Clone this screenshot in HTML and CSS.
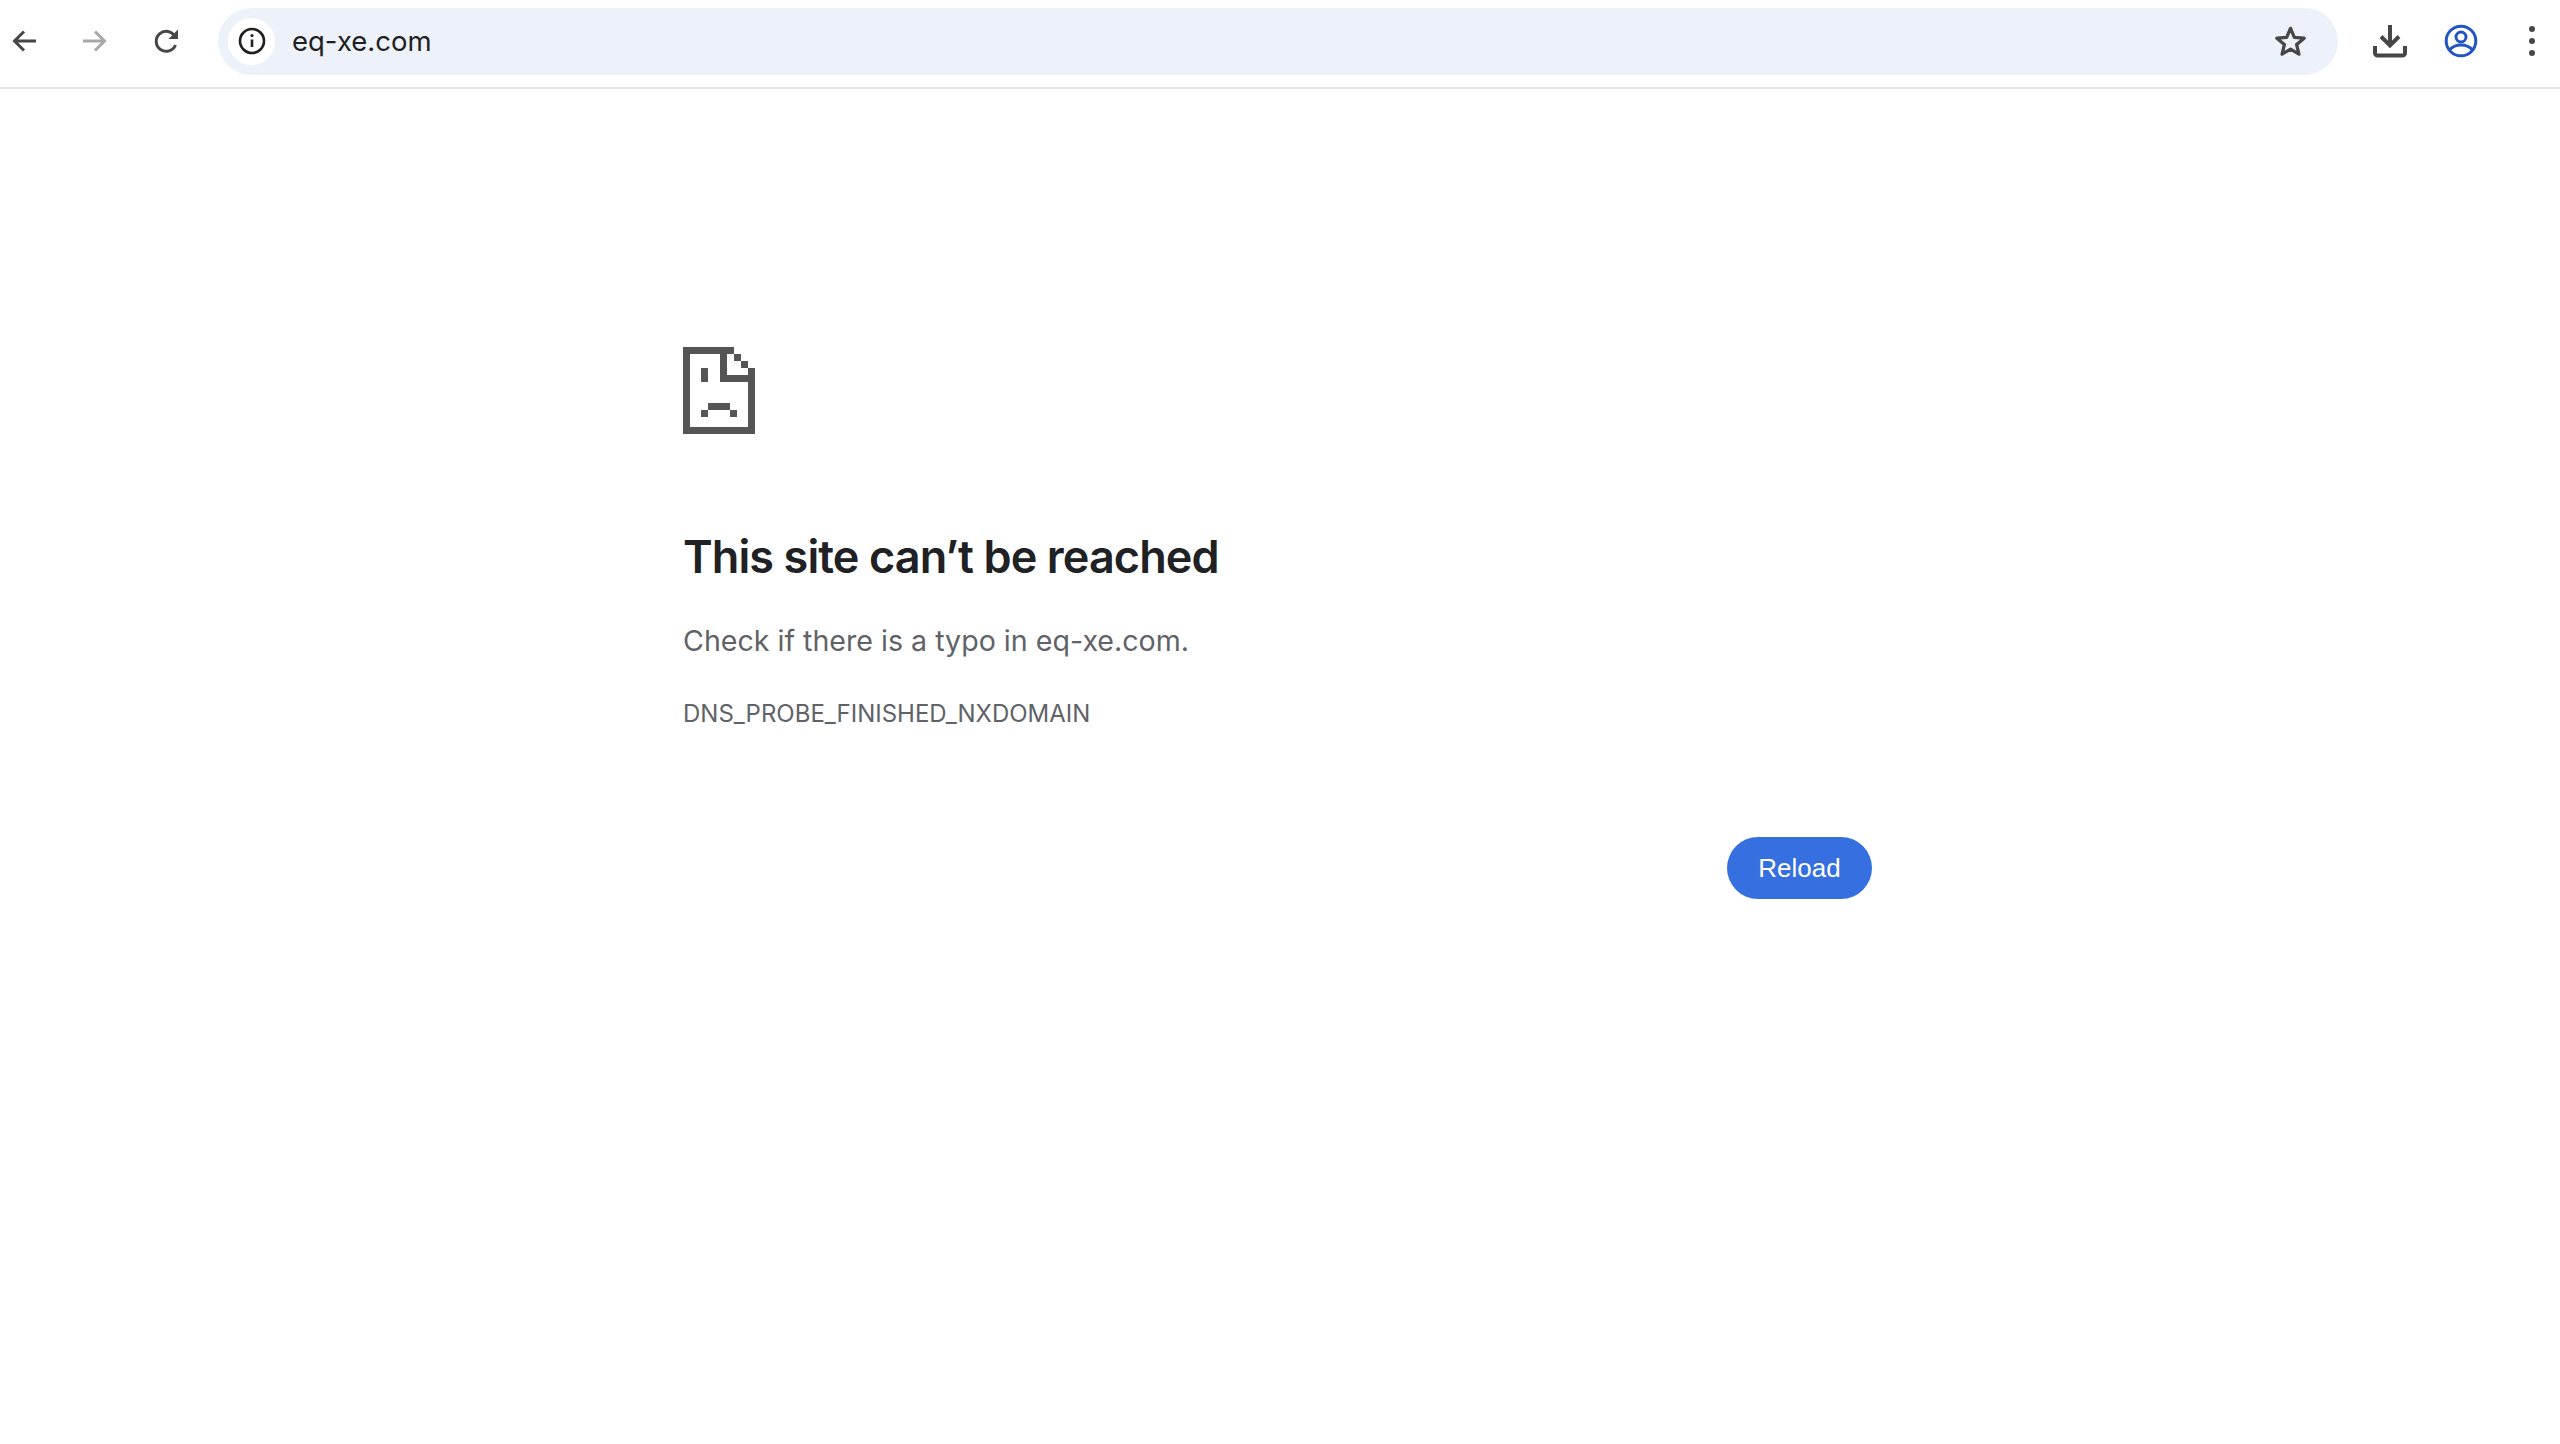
FILE: index.html
```html
<!DOCTYPE html>
<html lang="en">
<head>
    <meta charset="UTF-8">
    <title>eq-xe.com</title>
    <link rel="stylesheet" href="styles.css">
</head>
<body>
    <!-- Browser toolbar -->
    <div class="toolbar">
        <svg class="nav-icon back" viewBox="0 0 26 26"><path d="M24 13H3M12 3.5 2.5 13l9.500 9.500"/></svg>
        <svg class="nav-icon forward" viewBox="0 0 26 26"><path d="M2 13h21M14 3.500l9.500 9.500-9.500 9.500"/></svg>
        <svg class="nav-icon reload-icon" viewBox="0 0 26 26"><path d="M21.500 17a10 10 0 1 1-.5-8.500"/><path class="solid" d="M24 1.500V11h-9.500z"/></svg>
        <div class="omnibox">
            <div class="site-info">
                <svg class="info-icon" viewBox="0 0 28 28"><circle cx="14" cy="14" r="12"/><path d="M14 12.500V20"/><circle class="solid" cx="14" cy="8.500" r="1.600"/></svg>
            </div>
            <span class="url">eq-xe.com</span>
            <svg class="star-icon" viewBox="0 0 32 32"><path d="M16 4l3.500 8.300 9 .7-6.900 5.800 2.100 8.800L16 23l-7.700 4.600 2.100-8.800L3.500 13l9-.7z"/></svg>
        </div>
        <div class="toolbar-right">
            <svg class="download-icon" viewBox="0 0 34 34"><path d="M17 1v19M8 12.500l9 9 9-9"/><path d="M2 22v7a2.500 2.500 0 0 0 2.500 2.500h25A2.500 2.500 0 0 0 32 29v-7"/></svg>
            <svg class="profile-icon" viewBox="0 0 34 34"><circle cx="17" cy="17" r="14.800"/><circle cx="17" cy="13" r="5"/><path d="M5.500 26c3-3.500 7-5 11.500-5s8.500 1.500 11.500 5"/></svg>
            <svg class="menu-icon" viewBox="0 0 8 32"><circle cx="4" cy="4" r="3"/><circle cx="4" cy="16" r="3"/><circle cx="4" cy="28" r="3"/></svg>
        </div>
    </div>

    <!-- Error page -->
    <div class="error-page">
        <svg class="sad-doc" viewBox="0 0 72 87">
            <path d="M0 0h51v7H0zM0 7h7v73H0zM0 80h72v7H0zM65 21h7v59h-7zM37 7h7v21h-7zM37 28h28v7H37zM51 7h7v7h-7zM58 14h7v7h-7z"/>
            <path d="M18 21h7v14h-7zM25 56h22v7H25zM18 63h7v7h-7zM47 63h7v7h-7z"/>
        </svg>
        <h1>This site can’t be reached</h1>
        <p class="message">Check if there is a typo in eq-xe.com.</p>
        <p class="error-code">DNS_PROBE_FINISHED_NXDOMAIN</p>
        <div class="actions">
            <button class="reload-btn">Reload</button>
        </div>
    </div>
</body>
</html>
```

FILE: styles.css
```css
* {
    margin: 0;
    padding: 0;
    box-sizing: border-box;
}

body {
    background-color: #fff;
    font-family: Inter, "Noto Sans", sans-serif;
}

svg {
    display: block;
    flex-shrink: 0;
}

.toolbar {
    display: flex;
    align-items: center;
    height: 89px;
    padding-bottom: 5px;
    border-bottom: 2px solid #e3e3e3;
}

.nav-icon {
    width: 26px;
    height: 26px;
    margin-left: 12px;
    margin-right: 43px;
    fill: none;
    stroke: #474747;
    stroke-width: 3;
}

.nav-icon.forward {
    margin-left: 0;
    margin-right: 47px;
    stroke: #a8a8a8;
}

.nav-icon.reload-icon {
    margin-left: 0;
    margin-right: 38px;
}

.solid {
    fill: #474747;
    stroke: none;
}

.omnibox {
    display: flex;
    align-items: center;
    width: 2120px;
    height: 67px;
    padding: 0 30px 0 10px;
    background-color: #edf2fa;
    border-radius: 34px;
}

.site-info {
    display: flex;
    align-items: center;
    justify-content: center;
    width: 47px;
    height: 47px;
    background-color: #fff;
    border-radius: 50%;
}

.info-icon {
    width: 28px;
    height: 28px;
    fill: none;
    stroke: #1f1f1f;
    stroke-width: 2.600;
}

.info-icon .solid {
    fill: #1f1f1f;
}

.url {
    flex-grow: 1;
    margin-left: 17px;
    font-size: 27.500px;
    color: #1f1f1f;
}

.star-icon {
    width: 35px;
    height: 35px;
    fill: none;
    stroke: #474747;
    stroke-width: 3;
    stroke-linejoin: round;
}

.toolbar-right {
    display: flex;
    align-items: center;
    flex-grow: 1;
    padding-left: 35px;
}

.download-icon {
    width: 34px;
    height: 34px;
    fill: none;
    stroke: #474747;
    stroke-width: 4;
}

.profile-icon {
    width: 34px;
    height: 34px;
    margin-left: 37px;
    fill: none;
    stroke: #2255c4;
    stroke-width: 3;
}

.menu-icon {
    width: 8px;
    height: 32px;
    margin-left: 50px;
    fill: #474747;
}

.error-page {
    width: 1189px;
    margin: 258px 0 0 683px;
}

.sad-doc {
    width: 72px;
    height: 87px;
    fill: #555;
    shape-rendering: crispEdges;
}

h1 {
    margin-top: 95px;
    font-size: 45px;
    line-height: 56px;
    font-weight: 600;
    letter-spacing: -0.9px;
    color: #202124;
}

.message {
    margin-top: 36px;
    font-size: 28.600px;
    line-height: 40px;
    color: #5f6368;
}

.error-code {
    margin-top: 38px;
    font-size: 24px;
    line-height: 30px;
    color: #5f6368;
}

.actions {
    display: flex;
    justify-content: flex-end;
    margin-top: 108px;
}

.reload-btn {
    width: 145px;
    height: 62px;
    background-color: #3670e0;
    color: white;
    border: none;
    border-radius: 31px;
    font-family: "Liberation Sans", Arial, sans-serif;
    font-size: 26px;
}
```
